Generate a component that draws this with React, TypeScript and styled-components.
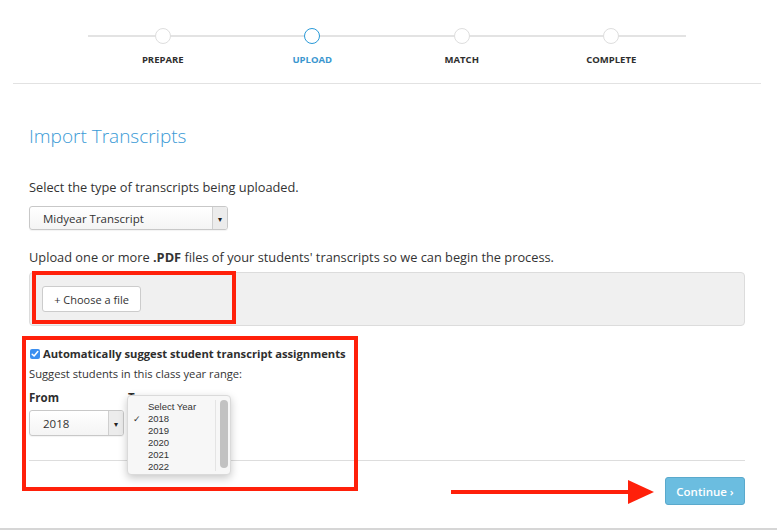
import styled, { createGlobalStyle } from "styled-components";

const GlobalStyle = createGlobalStyle`
  html, body {
    margin: 0;
    padding: 0;
    background: #ffffff;
    font-family: "Open Sans", "Noto Sans", sans-serif;
    color: #333333;
  }
`;

const steps = ["PREPARE", "UPLOAD", "MATCH", "COMPLETE"];
const years = ["2018", "2019", "2020", "2021", "2022"];

const App = () => {
  return (
    <Page>
      <GlobalStyle />
      <Header>
        <Stepper>
          {steps.map((step) => (
            <Step key={step}>
              <Dot $active={step === "UPLOAD"} />
              <StepLabel $active={step === "UPLOAD"}>{step}</StepLabel>
            </Step>
          ))}
        </Stepper>
      </Header>

      <Content>
        <Title>Import Transcripts</Title>
        <Prompt $gap={28}>Select the type of transcripts being uploaded.</Prompt>
        <SelectBox $width={199} $height={24} $gap={10}>
          <SelectText>Midyear Transcript</SelectText>
          <SelectArrow>▾</SelectArrow>
        </SelectBox>

        <Prompt $gap={18}>
          Upload one or more <b>.PDF</b> files of your students' transcripts so
          we can begin the process.
        </Prompt>
        <Dropzone>
          <FileButton>+ Choose a file</FileButton>
          <Highlight $left={2} $top={-2} $width={204} $height={53} />
        </Dropzone>

        <SuggestBlock>
          <CheckRow>
            <CheckBox>
              <svg width="8" height="8" viewBox="0 0 8 8">
                <path
                  d="M1.2 4.2 L3.1 6 L6.8 1.6"
                  fill="none"
                  stroke="#fff"
                  strokeWidth="1.5"
                  strokeLinecap="round"
                  strokeLinejoin="round"
                />
              </svg>
            </CheckBox>
            Automatically suggest student transcript assignments
          </CheckRow>
          <SmallText>Suggest students in this class year range:</SmallText>
          <RangeRow>
            <RangeColumn>
              <FieldLabel>From</FieldLabel>
              <SelectBox $width={95} $height={26} $gap={4}>
                <SelectText>2018</SelectText>
                <SelectArrow>▾</SelectArrow>
              </SelectBox>
            </RangeColumn>
            <RangeColumn>
              <FieldLabel>To</FieldLabel>
              <YearMenu>
                <MenuList>
                  <MenuItem>Select Year</MenuItem>
                  {years.map((y) => (
                    <MenuItem key={y}>
                      {y === "2018" && <Check>✓</Check>}
                      {y}
                    </MenuItem>
                  ))}
                </MenuList>
                <ScrollTrack>
                  <ScrollThumb />
                </ScrollTrack>
              </YearMenu>
            </RangeColumn>
          </RangeRow>
          <Highlight $left={-7} $top={-10} $width={336} $height={155} />
        </SuggestBlock>

        <Divider />
        <Footer>
          <ArrowMark>
            <svg width="204" height="26" viewBox="0 0 204 26">
              <rect x="0" y="11" width="180" height="4" fill="#ff200a" />
              <polygon points="177,1 203,13 177,25" fill="#ff200a" />
            </svg>
          </ArrowMark>
          <ContinueButton>Continue ›</ContinueButton>
        </Footer>
      </Content>
      <BottomRule />
    </Page>
  );
};

export default App;

const Page = styled.div`
  width: 777px;
  min-height: 530px;
  position: relative;
`;

const Header = styled.div`
  margin: 0 16px 0 13px;
  height: 84px;
  border-bottom: 1px solid #e2e2e2;
  box-sizing: border-box;
  padding-top: 28px;
`;

const Stepper = styled.div`
  position: relative;
  margin-left: 75px;
  width: 598px;
  display: grid;
  grid-template-columns: repeat(4, 1fr);

  &::before {
    content: "";
    position: absolute;
    left: 0;
    right: 0;
    top: 7px;
    height: 2px;
    background: #e3e3e3;
  }
`;

const Step = styled.div`
  display: flex;
  flex-direction: column;
  align-items: center;
  position: relative;
`;

const Dot = styled.div<{ $active?: boolean }>`
  width: 16px;
  height: 16px;
  box-sizing: border-box;
  border-radius: 50%;
  background: #ffffff;
  border: 1.5px solid ${(p) => (p.$active ? "#2a9ad8" : "#dedede")};
`;

const StepLabel = styled.div<{ $active?: boolean }>`
  margin-top: 10px;
  font-size: 9.5px;
  line-height: 12px;
  font-weight: 700;
  color: ${(p) => (p.$active ? "#3a96cf" : "#2e2e2e")};
`;

const Content = styled.div`
  padding: 0 32px 0 29px;
`;

const Title = styled.h1`
  margin: 38px 0 0;
  font-size: 19px;
  line-height: 28px;
  font-weight: 300;
  color: #3a9ad6;
`;

const Prompt = styled.div<{ $gap: number }>`
  margin-top: ${(p) => p.$gap}px;
  font-size: 12.8px;
  line-height: 18px;
  color: #333333;

  b {
    font-weight: 700;
  }
`;

const SelectBox = styled.div<{ $width: number; $height: number; $gap: number }>`
  margin-top: ${(p) => p.$gap}px;
  width: ${(p) => p.$width}px;
  height: ${(p) => p.$height}px;
  box-sizing: border-box;
  border: 1px solid #c8c8c8;
  border-radius: 3px;
  background: linear-gradient(#ffffff, #f4f4f4);
  display: flex;
  align-items: stretch;
  box-shadow: 0 1px 1px rgba(0, 0, 0, 0.05);
`;

const SelectText = styled.div`
  flex: 1;
  display: flex;
  align-items: center;
  padding-left: 13px;
  font-size: 11.5px;
  color: #333333;
`;

const SelectArrow = styled.div`
  width: 14px;
  border-left: 1px solid #cfcfcf;
  background: #ececec;
  display: flex;
  align-items: center;
  justify-content: center;
  font-size: 8px;
  color: #222222;
  border-radius: 0 2px 2px 0;
`;

const Dropzone = styled.div`
  position: relative;
  margin-top: 6px;
  height: 54px;
  box-sizing: border-box;
  border: 1px solid #dcdcdc;
  border-radius: 4px;
  background: #f0f0f0;
  padding: 13px 12px;
`;

const FileButton = styled.button`
  height: 26px;
  width: 99px;
  box-sizing: border-box;
  border: 1px solid #cccccc;
  border-radius: 3px;
  background: #ffffff;
  font-family: "Open Sans", sans-serif;
  font-size: 11px;
  color: #333333;
  padding: 0;
`;

const Highlight = styled.div<{
  $left: number;
  $top: number;
  $width: number;
  $height: number;
}>`
  position: absolute;
  left: ${(p) => p.$left}px;
  top: ${(p) => p.$top}px;
  width: ${(p) => p.$width}px;
  height: ${(p) => p.$height}px;
  box-sizing: border-box;
  border: 4px solid #ff200a;
  pointer-events: none;
  z-index: 3;
`;

const SuggestBlock = styled.div`
  position: relative;
  margin-top: 20px;
`;

const CheckRow = styled.div`
  display: flex;
  align-items: center;
  gap: 3px;
  font-size: 11.2px;
  line-height: 16px;
  font-weight: 700;
  color: #2e2e2e;
`;

const CheckBox = styled.span`
  width: 10px;
  height: 10px;
  margin-left: 1px;
  border-radius: 2px;
  background: #3b8ff0;
  display: inline-flex;
  align-items: center;
  justify-content: center;
`;

const SmallText = styled.div`
  margin-top: 4px;
  font-size: 11.2px;
  line-height: 16px;
  color: #333333;
`;

const RangeRow = styled.div`
  display: flex;
  gap: 4px;
  margin-top: 8px;
`;

const RangeColumn = styled.div`
  position: relative;
  display: flex;
  flex-direction: column;
`;

const FieldLabel = styled.div`
  font-size: 11.5px;
  line-height: 16px;
  font-weight: 700;
  color: #2e2e2e;
`;

const YearMenu = styled.div`
  position: absolute;
  left: -1px;
  top: 5px;
  width: 104px;
  height: 80px;
  box-sizing: border-box;
  background: #f7f7f7;
  border: 1px solid #dadada;
  border-radius: 4px;
  box-shadow: 0 3px 8px rgba(0, 0, 0, 0.22);
  display: flex;
  overflow: hidden;
  z-index: 2;
`;

const MenuList = styled.div`
  flex: 1;
  padding-top: 5px;
  font-family: "Liberation Sans", Arial, sans-serif;
  font-size: 9.5px;
  color: #333333;
`;

const MenuItem = styled.div`
  position: relative;
  height: 12px;
  line-height: 12px;
  padding-left: 20px;
`;

const Check = styled.span`
  position: absolute;
  left: 5px;
  font-size: 9px;
`;

const ScrollTrack = styled.div`
  width: 13px;
  margin: 4px 0 3px;
  border-left: 1px solid #e4e4e4;
  display: flex;
  justify-content: center;
  padding-left: 1px;
`;

const ScrollThumb = styled.div`
  width: 8px;
  height: 68px;
  border-radius: 4px;
  background: #c2c2c2;
`;

const Divider = styled.div`
  margin-top: 24px;
  height: 1px;
  background: #dddddd;
`;

const Footer = styled.div`
  position: relative;
  margin-top: 16px;
  display: flex;
  justify-content: flex-end;
`;

const ArrowMark = styled.div`
  position: absolute;
  right: 90px;
  top: 2px;
  line-height: 0;
`;

const ContinueButton = styled.button`
  width: 80px;
  height: 28px;
  box-sizing: border-box;
  border: 1px solid #5aa9cc;
  border-radius: 3px;
  background: #6bbde0;
  color: #ffffff;
  font-family: "Open Sans", sans-serif;
  font-size: 11.5px;
  font-weight: 600;
  padding: 0;
`;

const BottomRule = styled.div`
  margin-top: 23px;
  height: 2px;
  background: #d6d6d6;
`;
